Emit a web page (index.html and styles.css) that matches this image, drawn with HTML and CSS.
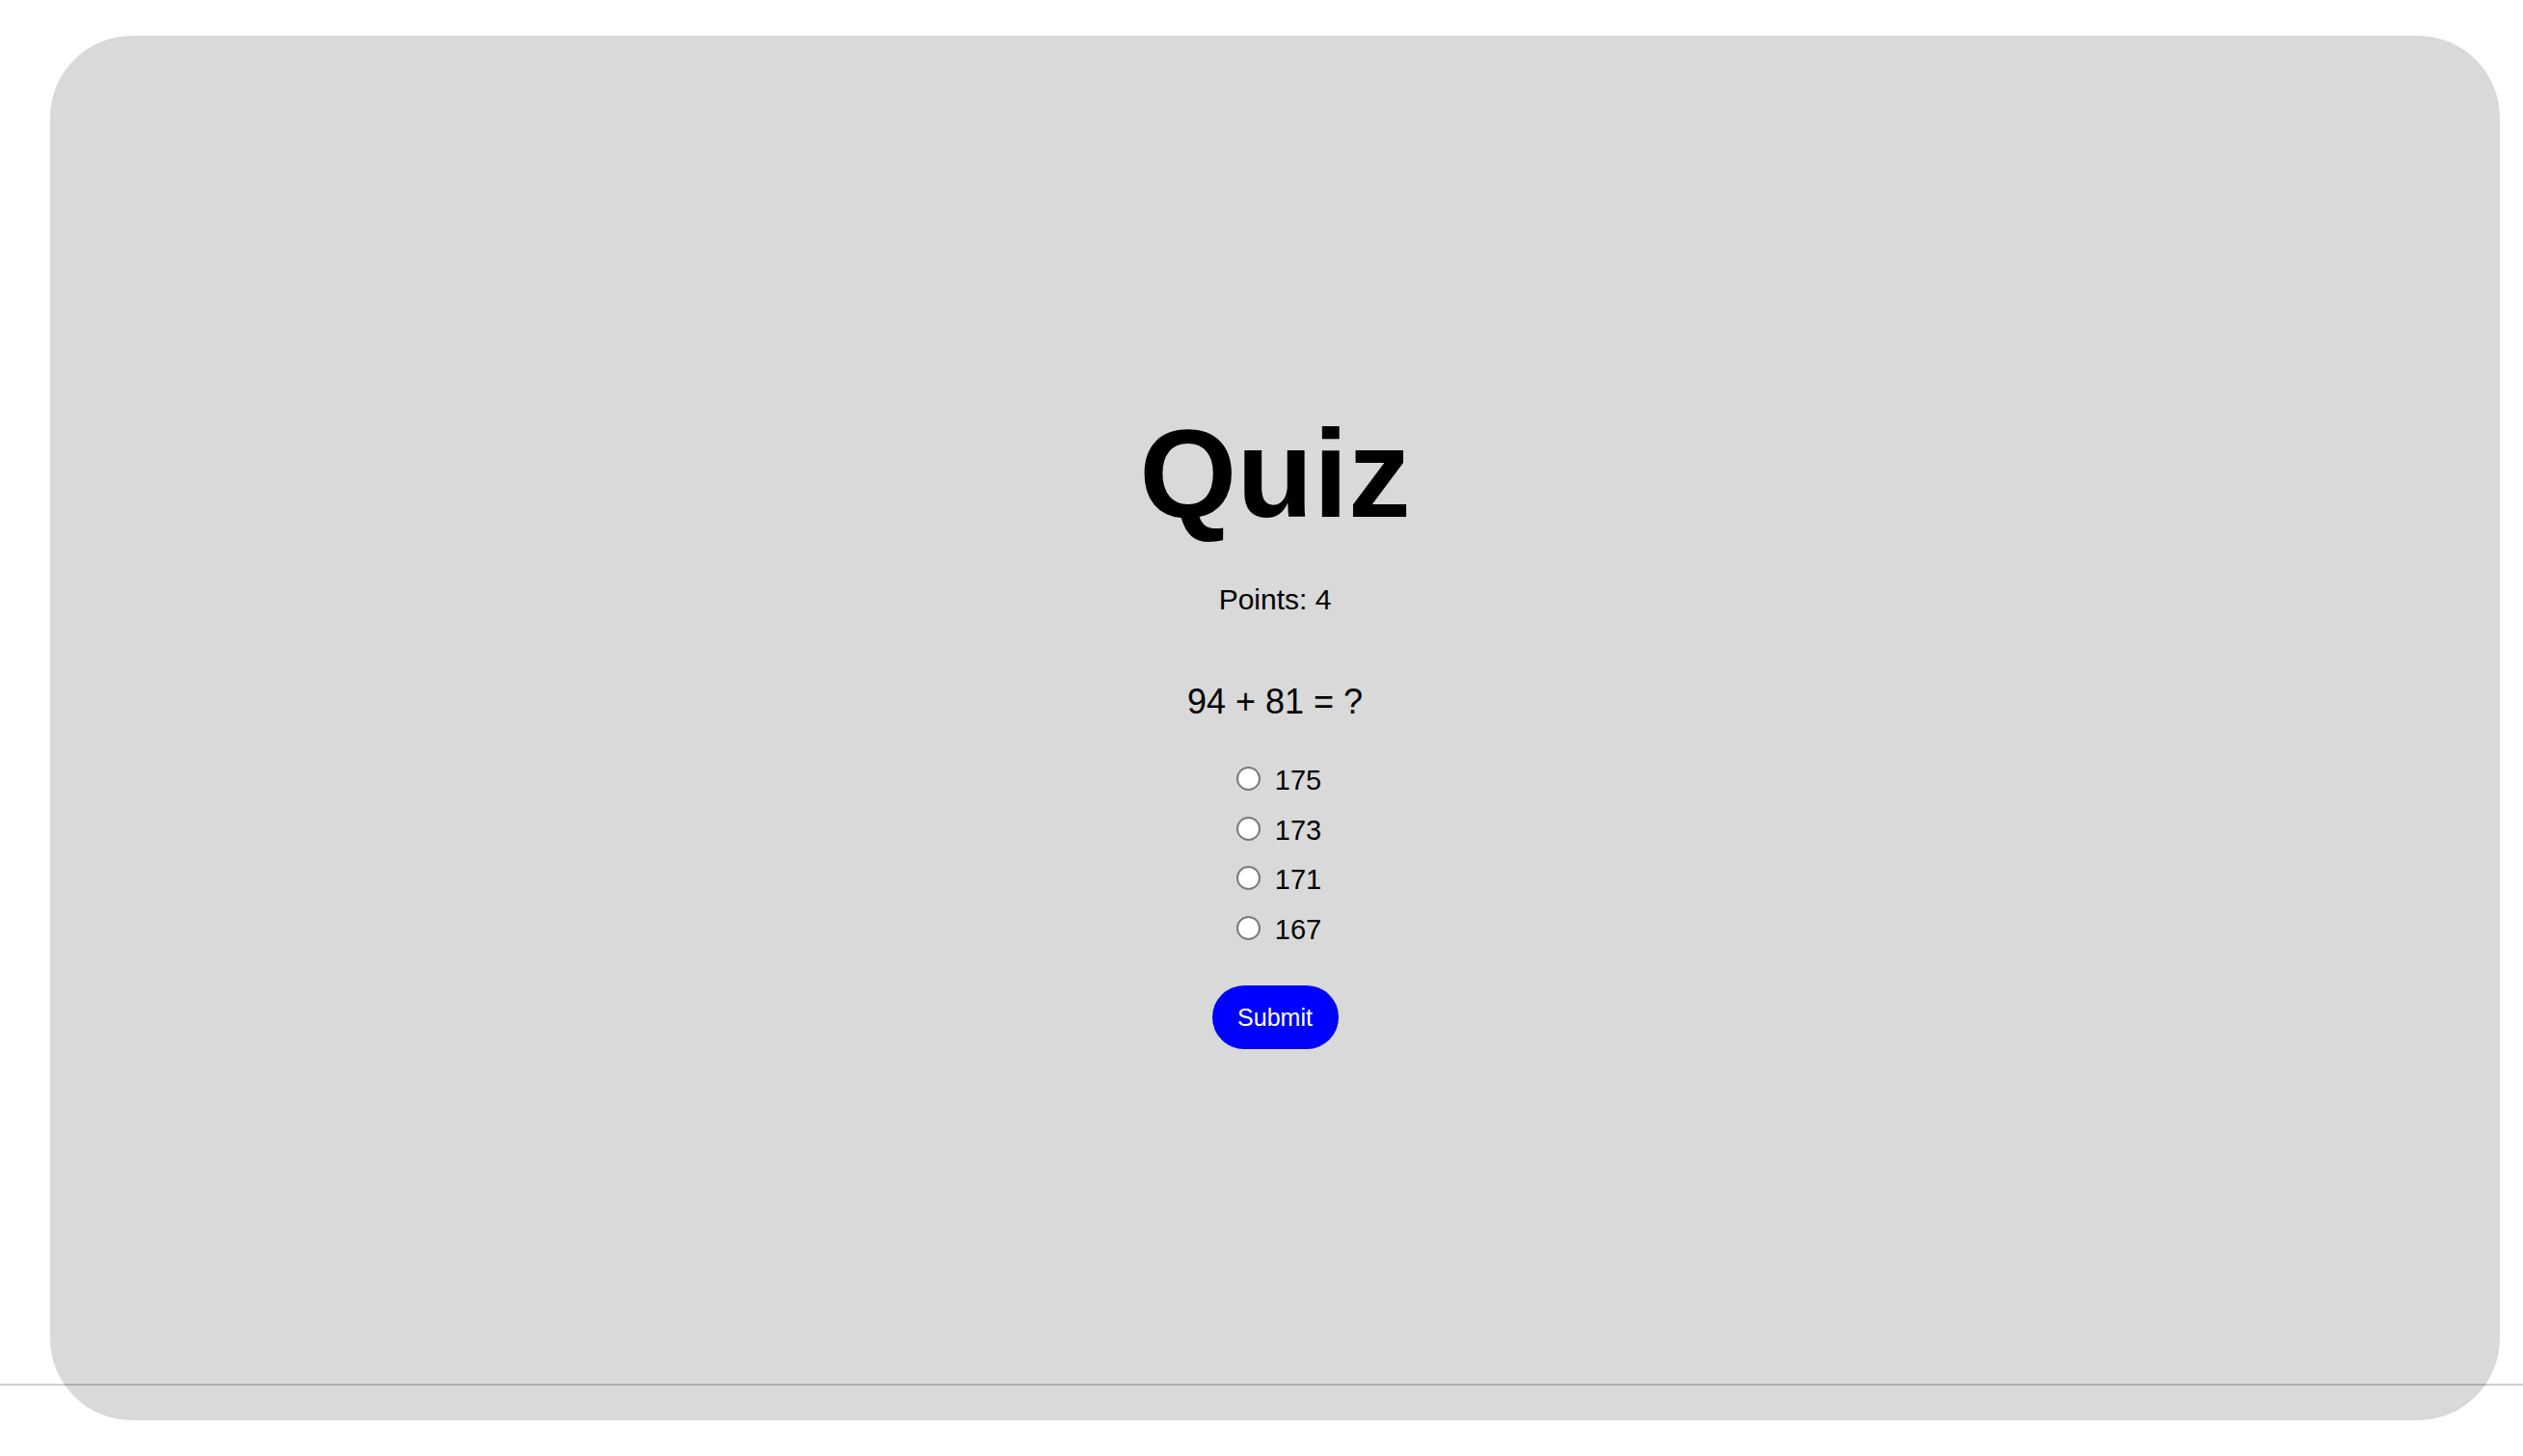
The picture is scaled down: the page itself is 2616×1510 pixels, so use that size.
FILE: index.html
```html
<!DOCTYPE html>
<html lang="en">
<head>
<meta charset="utf-8">
<title>Quiz</title>
<link rel="stylesheet" href="styles.css">
</head>
<body>
<main class="card">
  <h1 class="title">Quiz</h1>
  <p class="points">Points: 4</p>
  <p class="question">94 + 81 = ?</p>
  <form class="options">
    <label class="option"><input type="radio" name="answer" class="radio"><span>175</span></label>
    <label class="option"><input type="radio" name="answer" class="radio"><span>173</span></label>
    <label class="option"><input type="radio" name="answer" class="radio"><span>171</span></label>
    <label class="option"><input type="radio" name="answer" class="radio"><span>167</span></label>
  </form>
  <button class="submit" type="button">Submit</button>
</main>
<div class="rule"></div>
</body>
</html>
```
FILE: styles.css
```css
html, body {
  margin: 0;
  padding: 0;
  background: #ffffff;
}
body {
  font-family: "Liberation Sans", Arial, sans-serif;
  color: #000;
  padding: 37px 24px 37px 52px;
  box-sizing: border-box;
  height: 1510px;
  overflow: hidden;
}
.card {
  background: #d9d9d9;
  border-radius: 85px;
  height: 1436px;
  display: flex;
  flex-direction: column;
  align-items: center;
  padding-top: 389px;
  box-sizing: border-box;
}
.title {
  margin: 0;
  font-size: 130px;
  line-height: 130px;
  font-weight: 700;
}
.points {
  margin: 48px 0 0;
  font-size: 30px;
  line-height: 36px;
}
.question {
  margin: 66px 0 0;
  font-size: 36px;
  line-height: 44px;
}
.options {
  margin: 33px 0 0;
  display: flex;
  flex-direction: column;
  align-items: center;
}
.option {
  display: flex;
  align-items: center;
  height: 51.5px;
  font-size: 29px;
  gap: 15px;
  padding-left: 8px;
}
.option span {
  line-height: 51.5px;
  position: relative;
  top: 1px;
}
.radio {
  appearance: none;
  -webkit-appearance: none;
  margin: 0;
  width: 25px;
  height: 25px;
  border-radius: 50%;
  border: 2px solid #7a7a7a;
  background: #ffffff;
  box-sizing: border-box;
  position: relative;
  top: -1px;
}
.submit {
  margin-top: 33px;
  width: 131px;
  height: 66px;
  border: none;
  border-radius: 33px;
  background: #0000ff;
  color: #ffffff;
  font-family: "Liberation Sans", Arial, sans-serif;
  font-size: 25px;
  padding: 0;
}
.rule {
  position: absolute;
  left: 0;
  right: 0;
  top: 1435px;
  height: 2px;
  background: rgba(0, 0, 0, 0.2);
}
```
